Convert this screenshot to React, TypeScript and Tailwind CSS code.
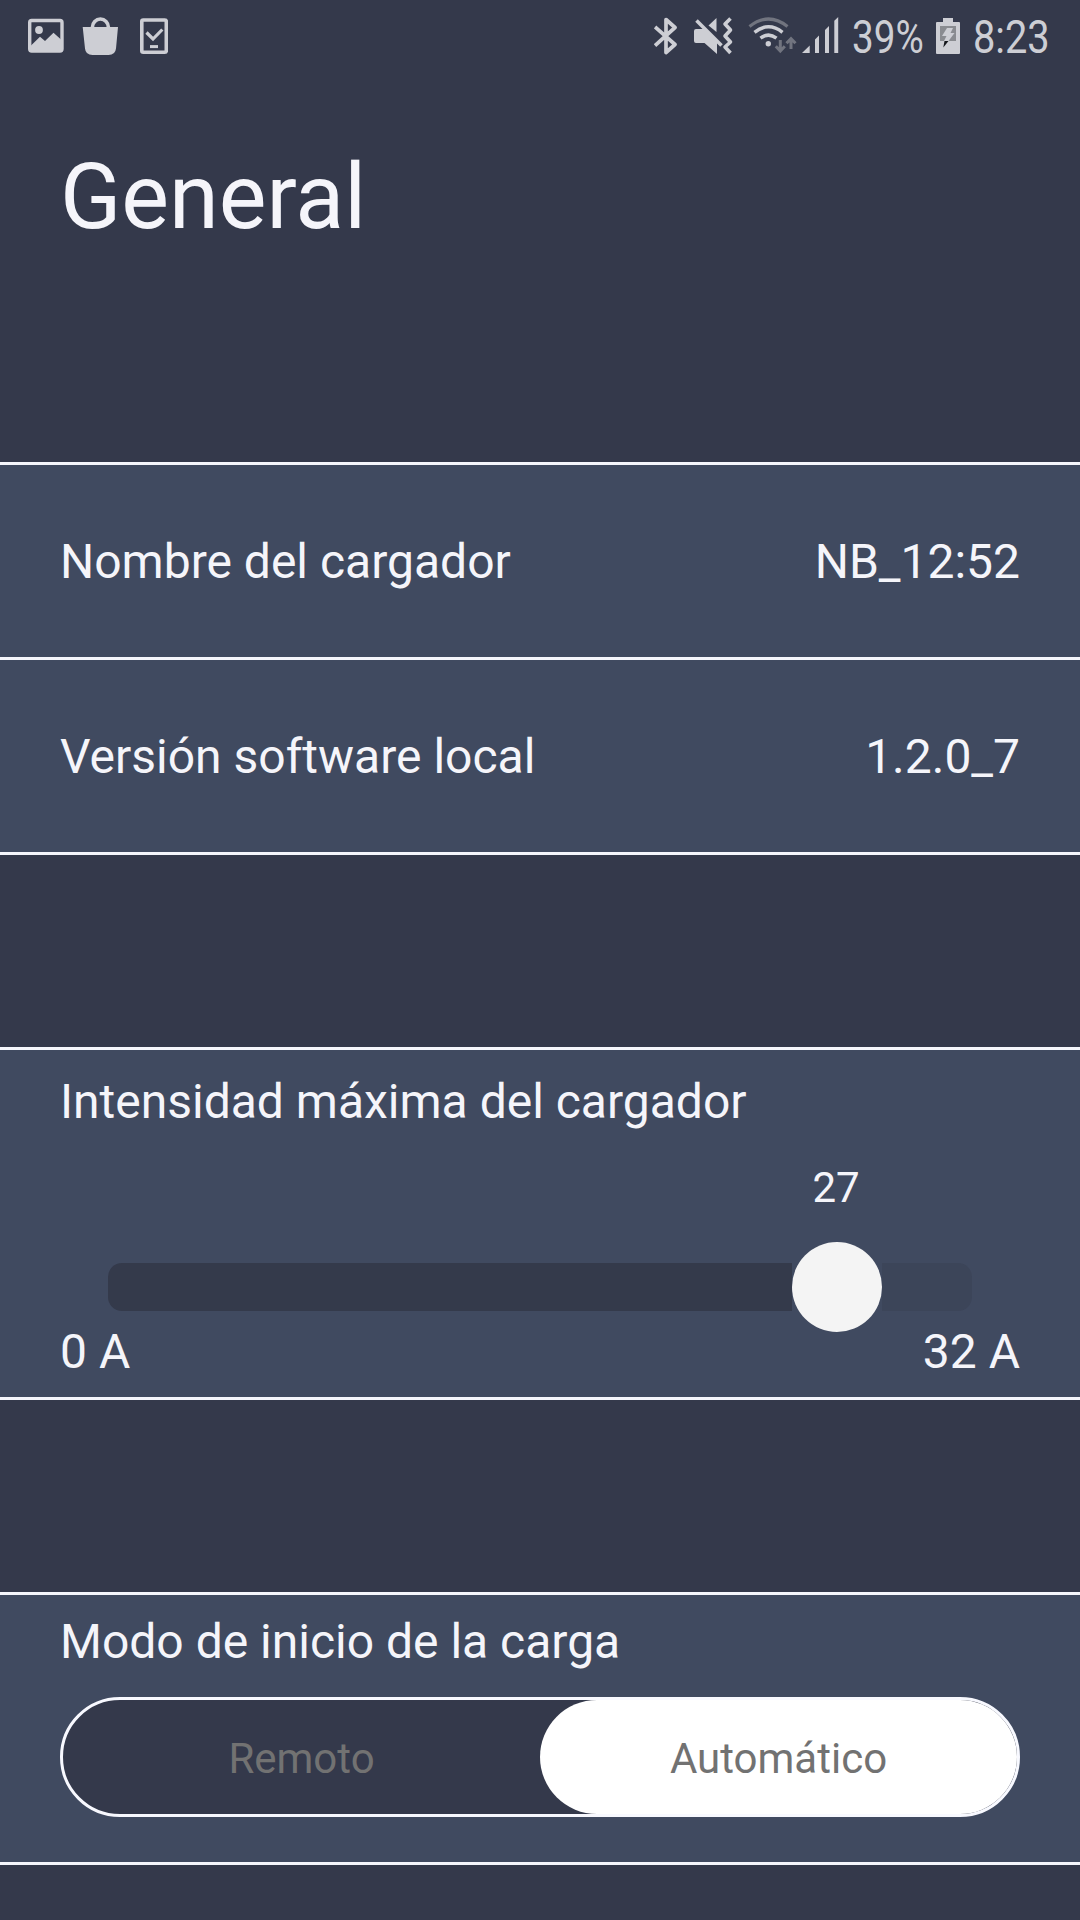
import type { ReactNode } from "react";

const rows = [
    { label: "Nombre del cargador", value: "NB_12:52" },
    { label: "Versión software local", value: "1.2.0_7" },
]

function NotificationIcons() {
    return (
        <div className="flex flex-row pl-7">
            {/* picture */}
            <svg className="w-9 h-[72px]" viewBox="28 0 36 72" fill="none">
                <rect x="29.7" y="20.5" width="32.3" height="30.5" rx="2" stroke="currentColor" strokeWidth="3.4" />
                <circle cx="39" cy="30" r="3.9" fill="currentColor" />
                <path d="M31 45.5L40 36.8L45 41L53.5 32.8L61 39.5V51H31Z" fill="currentColor" />
            </svg>
            {/* shopping bag */}
            <svg className="ml-[18px] w-9 h-[72px]" viewBox="82 0 36 72" fill="none">
                <path d="M82.7 27H118L116 48.5Q115.3 55 108.5 55H92.5Q85.6 55 85 48.5Z" fill="currentColor" />
                <path d="M92.4 28V27.2A8 8.2 0 0 1 108.4 27.2V28" stroke="currentColor" strokeWidth="3.6" />
            </svg>
            {/* device check */}
            <svg className="ml-[22px] w-7 h-[72px]" viewBox="140 0 28 72" fill="none" stroke="currentColor">
                <rect x="141.8" y="20" width="24.5" height="32.2" rx="1.5" strokeWidth="3.6" />
                <path d="M146.5 32.5L153 39L162.3 29.5" strokeWidth="3.2" />
                <path d="M150 46.6H158" strokeWidth="3" />
            </svg>
        </div>
    )
}

function SystemIcons() {
    return (
        <div className="flex flex-row">
            {/* bluetooth */}
            <svg className="w-10 h-[72px]" viewBox="654 0 40 72" fill="none" stroke="currentColor" strokeWidth="3.7">
                <path d="M655 27L675 44.5L666 52.5V19.5L675 27.5L655 45.5" strokeLinejoin="round" />
            </svg>
            {/* muted, vibrating */}
            <svg className="w-[54px] h-[72px]" viewBox="694 0 54 72" fill="none">
                <path d="M696 29H705L717 41V54L704.5 43H696Q694 43 694 41V31Q694 29 696 29Z" fill="currentColor" />
                <path d="M716.5 18V32L708.5 25.5Z" fill="currentColor" />
                <path d="M696.5 20.5L721.5 45.5" stroke="currentColor" strokeWidth="3.6" />
                <path d="M730.5 18.5L725 24L730.5 30L725 36L730.5 42L725 47L730.5 53" stroke="currentColor" strokeWidth="3.6" strokeLinejoin="round" />
            </svg>
            {/* wifi with traffic arrows */}
            <svg className="w-[54px] h-[72px]" viewBox="748 0 54 72" fill="none" stroke="currentColor">
                <g className="text-[#71747f]">
                    <path d="M749.5 26.5Q768.5 11.5 787.5 26.5" strokeWidth="3.2" />
                    <path d="M780.3 40V50M775.8 46.3L780.3 51L784.8 46.3" strokeWidth="3" />
                    <path d="M791 49V40M786.5 43.3L791 38.6L795.5 43.3" strokeWidth="3" />
                </g>
                <path d="M754.5 32.3Q768.5 21.3 782.5 32.3" strokeWidth="3.5" />
                <path d="M760.5 38.2Q768.5 32 776.5 38.2" strokeWidth="3.5" />
                <circle cx="768.3" cy="43.7" r="2.7" fill="currentColor" stroke="none" />
            </svg>
            {/* signal strength */}
            <svg className="w-[51px] h-[72px]" viewBox="802 0 51 72" fill="currentColor">
                <path d="M802 53L809.7 45.5V53ZM815 39.5L819 35.5V53H815ZM825 30L829 26V53H825ZM834.3 20.8L838.2 17V53H834.3Z" />
            </svg>
        </div>
    )
}

function StatusBar() {
    return (
        <div className="flex flex-row justify-between h-[72px] text-[#cdced4]">
            <NotificationIcons />
            <div className="flex flex-row">
                <SystemIcons />
                <div className="w-[83px] text-[46px] leading-[75px] origin-left scale-x-[0.84] -translate-x-px whitespace-nowrap">39%</div>
                {/* charging battery */}
                <svg className="w-9 h-[72px]" viewBox="936 0 36 72">
                    <path d="M943 18H953V22H959Q960 22 960 23V53Q960 54 959 54H937Q936 54 936 53V23Q936 22 937 22H943Z" fill="currentColor" />
                    <path d="M940 26H956V41H940Z" fill="#898b90" />
                    <path d="M947 28H953L950.5 33H954.5L948.5 41H944L946.5 36H942Z" fill="currentColor" />
                    <path d="M944.5 41H948.5L943.3 47.5Z" fill="#14161b" />
                </svg>
                <div className="w-[108px] text-[46px] leading-[75px] origin-left scale-x-[0.865] translate-x-px whitespace-nowrap">8:23</div>
            </div>
        </div>
    )
}

function Panel({ children }: { children: ReactNode }) {
    return (
        <section className="border-y-[3px] border-[#f5f6fc] bg-[#404a60] px-[60px]">
            {children}
        </section>
    )
}

function App() {
    return (
        <main className="w-[1080px] h-[1920px] overflow-hidden bg-[#34394b] text-[#f5f5fa] font-['Roboto',sans-serif] text-5xl">
            <StatusBar />

            <h1 className="h-[390px] px-[60px] pt-[66px] text-[90px] leading-[120px]">General</h1>

            <div className="divide-y-[3px] divide-[#f5f6fc] border-y-[3px] border-[#f5f6fc] bg-[#404a60]">
                {rows.map((row) => (
                    <div key={row.label} className="flex flex-row items-center justify-between box-content h-[190px] pt-0.5 px-[60px] w-[960px]">
                        <span>{row.label}</span>
                        <span>{row.value}</span>
                    </div>
                ))}
            </div>

            <div className="h-48"></div>

            <Panel>
                <h2 className="pt-[22px] leading-[60px]">Intensidad máxima del cargador</h2>
                <div className="mt-[31px] ml-[731px] w-[90px] text-center text-[42px] leading-[50px]">27</div>
                <div className="mt-[29px] mx-12 flex flex-row items-center">
                    <div className="w-[684px] h-12 rounded-l-[14px] bg-[#343a4b]"></div>
                    <div className="size-[90px] rounded-full bg-[#f4f4f4]"></div>
                    <div className="grow h-12 rounded-r-[14px] bg-[#3c4559]"></div>
                </div>
                <div className="flex flex-row justify-between pb-[25px] leading-[40px]">
                    <span>0 A</span>
                    <span>32 A</span>
                </div>
            </Panel>

            <div className="h-48"></div>

            <Panel>
                <h2 className="pt-[17px] leading-[60px]">Modo de inicio de la carga</h2>
                <div className="mt-[25px] mb-[45px] h-[120px] flex flex-row rounded-full border-[3px] border-[#f8f9ff] bg-[#34394b] text-[42px] text-[#727272]">
                    <button className="flex-1 pt-1">Remoto</button>
                    <button className="flex-1 pt-1 rounded-full bg-white">Automático</button>
                </div>
            </Panel>
        </main>
    )
}
export default App;
